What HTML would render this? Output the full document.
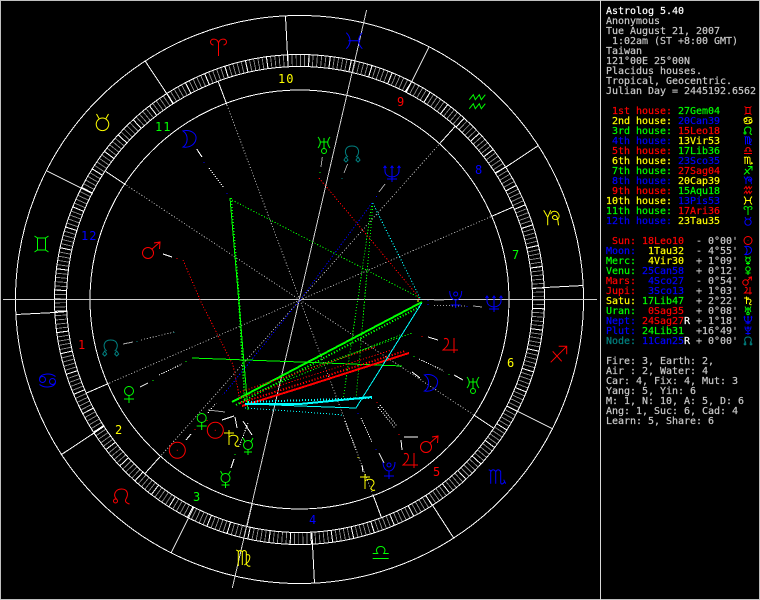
<!DOCTYPE html>
<html><head><meta charset="utf-8"><title>Astrolog 5.40</title>
<style>
html,body{margin:0;padding:0;background:#000;width:760px;height:600px;overflow:hidden}
svg{display:block;position:absolute;left:0;top:0}
text{font-family:"DejaVu Sans Mono","Liberation Mono",monospace;font-size:10px;letter-spacing:-.02px;white-space:pre;fill:#c8c8c8;stroke:#c8c8c8;stroke-width:.2px}
.w{fill:#fff;stroke:#fff}.r{fill:#ff0000;stroke:#ff0000}.y{fill:#ffff00;stroke:#ffff00}.g{fill:#00ff00;stroke:#00ff00}.b{fill:#0000ff;stroke:#0000ff}.t{fill:#008080;stroke:#008080}
text.n{font-size:12px;letter-spacing:1px;stroke-width:0}
</style></head><body>
<svg width="760" height="600" viewBox="0 0 760 600" xmlns="http://www.w3.org/2000/svg">
<defs>
<g id="ari" fill="none"><path d="M0 9V-4C-1-9-8-9-8-5C-8-3-6-2-5-2M0-4C1-9 8-9 8-5C8-3 6-2 5-2"/></g>
<g id="tau" fill="none"><circle cx="0" cy="3.300" r="6.300"/><path d="M-6-7L-3.500-2.500M6-7L3.500-2.500"/></g>
<g id="gem" fill="none"><path d="M-7-8L-4-6H4L7-8M-7 8L-4 6H4L7 8M-4-6V6M4-6V6"/></g>
<g id="can" fill="none"><circle cx="-5" cy="-1" r="3"/><circle cx="5" cy="1" r="3"/><path d="M-8-2C-7-7 3-8 8-4M8 2C7 7-3 8-8 4"/></g>
<g id="leo" fill="none"><circle cx="-6" cy="5" r="2"/><path d="M-5 3C-9-1-6-7 0-7C6-7 7-2 5 2C3 5 4 7 8 8"/></g>
<g id="vir" fill="none"><path d="M-7-8L-5-7V8M-5-6C-4-8-2-8-1-6V7M-1-6C0-8 2-8 3-6V5C3 7 5 9 7 8M3-3C8-5 8 3 1 7"/></g>
<g id="lib" fill="none"><path d="M-8 6H8M-8 1H-3C-6-3-3-6 0-6C3-6 6-3 3 1H8"/></g>
<g id="sco" fill="none"><path d="M-8-7L-6-6V7M-6-5C-4-8-2-7-1-5V7M-1-5C1-8 3-7 4-5V5C4 8 6 8 8 5L7 3M8 5L9 7"/></g>
<g id="sag" fill="none"><path d="M-8 8L8-8M0-8H8V0M-6-3L3 7"/></g>
<g id="cap" fill="none"><path d="M-8-8L-4-1V7M-4-1L-1-8M-1-4C0-8 5-8 7-4C9 0 4 3 1 0C0-2 3-4 5-2C7 2 6 5 7 7"/></g>
<g id="aqu" fill="none"><path d="M-8-3L-4-8L-2-3L2-8L4-3L8-8M-8 6L-4 1L-2 6L2 1L4 6L8 1"/></g>
<g id="pis" fill="none"><path d="M-8-8C-3-3-3 3-8 8M8-8C3-3 3 3 8 8M-6 0H6"/></g>
<g id="sun" fill="none"><circle r="8"/><path d="M0-.5V.5"/></g>
<g id="moo" fill="none"><path d="M-6-8C2-10 8-5 7 0C6 6 0 9-6 8C-1 5 0-4-6-8Z"/></g>
<g id="mer" fill="none"><circle cx="0" cy="-1" r="4.500"/><path d="M-5-8L-3-4.500M5-8L3-4.500M0 3.500V9M-4 6H4"/></g>
<g id="ven" fill="none"><circle cx="0" cy="-3" r="4.500"/><path d="M0 1.500V9M-5 5H5"/></g>
<g id="mar" fill="none"><circle cx="-5" cy="4" r="5.500"/><path d="M-1.500 0.500L7-7M1-6L7-7L6.500 0"/></g>
<g id="jup" fill="none"><path d="M-6-6C-2-8-1-4-2-1C-3 2-6 4-7 5H8M4-7V8"/></g>
<g id="sat" fill="none"><path d="M-3-8V7M-8-5H2M-3-1C0-4 6-3 6 1C6 3 3 5 3 6C3 8 5 9 7 8"/></g>
<g id="ura" fill="none"><circle cx="0" cy="6" r="2.500"/><path d="M-6-8C-3-4-3-1-6 3M6-8C3-4 3-1 6 3M-4-3H4M0-7V3.500"/></g>
<g id="nep" fill="none"><path d="M-7-8V-3C-7 1-3 3 0 3C3 3 7 1 7-3V-8M0-8V8M-5 5H5M-8.500-6L-7-8L-5.500-6M-1.500-6L0-8L1.500-6M5.500-6L7-8L8.500-6"/></g>
<g id="plu" fill="none"><circle cx="0" cy="-5" r="2"/><path d="M-6-8C-6-2-3 1 0 1C3 1 6-2 6-8M0 1V9M-5 6H5"/></g>
<g id="nod" fill="none"><path d="M-4 4C-8 1-8-7 0-7C8-7 8 1 4 4M-6 4L-4 7L-6 9L-8 7ZM6 4L8 7L6 9L4 7Z"/></g>
</defs>

<rect x="0.500" y="0.500" width="759" height="599" fill="#000" stroke="#c0c0c0"/>
<path d="M600.500 0V600" stroke="#d8d8d8" stroke-width="1" shape-rendering="crispEdges"/>

<g shape-rendering="crispEdges" fill="none">
<!-- degree band -->
<circle cx="299.500" cy="299.500" r="239" stroke="#8c8c8c" stroke-width="11" stroke-dasharray=".9 3.271" transform="rotate(.07 299.500 299.500)"/>
<circle cx="299.500" cy="299.500" r="239" stroke="#fff" stroke-width="11" stroke-dasharray="1 19.857" transform="rotate(2.07 299.500 299.500)"/>
<g stroke="#fff">
<circle cx="299.500" cy="299.500" r="284"/>
<circle cx="299.500" cy="299.500" r="245"/>
<circle cx="299.500" cy="299.500" r="233"/>
<circle cx="299.500" cy="299.500" r="209.500"/>
<!-- sign boundaries -->
<path d="M55 312.500L16 314.500M94 433L61.500 454.500M188.500 518L171 553M312.500 545L314.500 583.500M433 506L454 538.500M518 411.500L553 429M545 287.500L583.500 285.500M506 167L538.500 145.500M411.500 82L429 47M287.500 55L285.500 16.500M167 94L145.500 61.500M82 188.500L47 171"/>
<!-- band-crossing sign marks -->
<path d="M67 311.500L55 312.500M104 426.500L94 433M194 507L188.500 518M312 533L312.500 545M426 496L433 506M507 406L518 411.500M533 288.500L545 287.500M495 173L506 167M405 92L411.500 82M288 67L287.500 55M173 104L167 94M93 194L82 188.500"/>
<!-- house cusps -->
<path d="M108.500 383.500L86.500 393M160.700 456L144.800 473.700M252.300 503.500L246.800 526.800M373.300 495.700L381.700 518.200M474.300 415.300L494.300 428.600M491.500 216.400L513.500 206.800M439.300 144.100L455.200 126.300M226.700 104.300L218.300 81.800M125.700 184.700L105.700 171.400"/>
</g>
<!-- axes -->
<path d="M3 299.500H597M366.600 10L232.300 588" stroke="#d0d0d0"/>
<!-- house dotted -->
<g stroke="#a0a0a0" stroke-dasharray="1.200 1.800">
<path d="M300 300L108.500 383.500M300 300L160.700 456M300 300L373.300 495.700M300 300L474.300 415.300M300 300L491.500 216.400M300 300L439.300 144.100M300 300L226.700 104.300M300 300L125.700 184.700"/>
</g>

<!-- aspect lines -->
<g stroke="#00ff00" stroke-dasharray="1.200 1.800">
<path d="M232 200L420 298M372 203L343 400M373 203L356 400"/>
<path d="M231 198L239 300L245 400" stroke-width="2"/>
<path d="M232 402L400 335"/>
<path d="M236 405L421 306" stroke-width="2"/>
<path d="M240 392L412 333"/>
</g>
<g stroke="#00ff00">
<path d="M230 198L238.700 300L248 410"/>
<path d="M192 358L300 362L402 366"/>
<path d="M232 402L422 302" stroke-width="2"/>
</g>
<g stroke="#ff0000" stroke-dasharray="1.200 1.800">
<path d="M319 178L417 295L420 300M183 260L201 302L233 365L240 400"/>
<path d="M240 392L375 347M240 398L395 349"/>
<path d="M240 403L405 351" stroke-width="2"/>
</g>
<path d="M242 406L300 388L409 353" stroke="#ff0000" stroke-width="2"/>
<g stroke="#00ffff">
<path d="M421.700 303L356 408L300 406L250 404"/>
<path d="M372 397L300 404L245 404" stroke-width="2"/>
</g>
<g stroke="#00ffff" stroke-dasharray="1.200 1.800">
<path d="M372.700 203L421 300M245 408L300 411.700L343 415"/>
<path d="M248 402L372 398" stroke-width="2"/>
</g>
<path d="M372 203L300 300L223 395" stroke="#0000ff" stroke-dasharray="1.200 1.800"/>

<!-- planet leader lines -->
<g stroke="#fff">
<path d="M163 254L172 257M196.700 149L202 157M140 387L148 383M186 440L191 434M222 420L234 416M235 417L237 428M243 421L252 435M234 459L231 468M428 337L438 340M454 375L463 380M412 372L420 378M404 437L418 437M401 440L402 450M379 453L384 463M362 465L363 472"/>
</g>
<g stroke="#fff" stroke-dasharray="1.200 1.300">
<path d="M209 168L224 188M159 375L182 364M208 413L216 403M248 423L239 447M419 359L444 371M378 407L395 428M380 405L397 426M361 418L372 442M345 421L356 450"/>
</g>
<g stroke="#a0a0a0">
<path d="M322.300 157L321 167M347.600 164L344 173M385 184L379 192M123 344L133 342M208 410L225 412M434 300L444 300M473 306L482 307"/>
</g>
<path d="M434 305.500L465 306M141 340L174 332" stroke="#a0a0a0" stroke-dasharray="1.200 1.800"/>
<!-- coloured dots -->
<g stroke-width="1.200">
<path d="M204 162v1M227 193v1M376.500 196v1M428 300v1M428 304v1M467 306v1" stroke="#0000ff"/>
<path d="M177 258v1M195 429v1M207 420v1M422 336v1M399 434v1M377 402v1" stroke="#ff0000"/>
<path d="M320 172v1M153 380v1M186 361v1M235 454v1M449 374v1M414 356v1" stroke="#00ff00"/>
<path d="M342 178v1M137 341v1M174 332v1" stroke="#008080"/>
<path d="M376 449v1M358 413v1" stroke="#0000ff"/>
<path d="M358 457v1M418 300v2" stroke="#ffff00"/>
</g>
</g>

<!-- sign glyphs on wheel -->
<g stroke-width="1" stroke-linejoin="miter">
<use href="#ari" x="218.500" y="47" stroke="#ff0000"/>
<use href="#tau" x="102.500" y="121" stroke="#ffff00"/>
<use href="#gem" x="41.500" y="244" stroke="#00ff00"/>
<use href="#can" x="47.500" y="380.500" stroke="#0000ff"/>
<use href="#leo" x="121.500" y="496" stroke="#ff0000"/>
<use href="#vir" x="243.300" y="558" stroke="#ffff00"/>
<use href="#lib" x="380.700" y="552.500" stroke="#00ff00"/>
<use href="#sco" x="496.700" y="476.700" stroke="#0000ff"/>
<use href="#sag" x="558.700" y="354.300" stroke="#ff0000"/>
<use href="#cap" x="551.700" y="218.300" stroke="#ffff00"/>
<use href="#aqu" x="477.300" y="102.700" stroke="#00ff00"/>
<use href="#pis" x="354.300" y="40.700" stroke="#0000ff"/>
<!-- planets on wheel -->
<use href="#moo" x="189" y="139" stroke="#0000ff"/>
<use href="#mar" x="153" y="249" stroke="#ff0000"/>
<use href="#ura" x="324" y="145" stroke="#00ff00"/>
<use href="#nod" x="352" y="153" stroke="#008080"/>
<use href="#nep" x="392" y="174" stroke="#0000ff"/>
<use href="#nod" x="110.700" y="347" stroke="#008080"/>
<use href="#ven" x="129" y="394" stroke="#00ff00"/>
<use href="#ven" x="201.700" y="421" stroke="#00ff00"/>
<use href="#sun" x="215.300" y="430.300" stroke="#ff0000"/>
<use href="#sun" x="177.300" y="450.300" stroke="#ff0000"/>
<use href="#sat" x="232" y="438" stroke="#ffff00"/>
<use href="#mer" x="248" y="446" stroke="#00ff00"/>
<use href="#mer" x="225.500" y="479" stroke="#00ff00"/>
<use href="#plu" x="455.700" y="299" stroke="#0000ff"/>
<use href="#nep" x="494" y="304" stroke="#0000ff"/>
<use href="#jup" x="450" y="345" stroke="#ff0000"/>
<use href="#ura" x="473" y="385" stroke="#00ff00"/>
<use href="#moo" x="430.500" y="383" stroke="#0000ff"/>
<use href="#mar" x="431" y="443" stroke="#ff0000"/>
<use href="#jup" x="410" y="460" stroke="#ff0000"/>
<use href="#plu" x="389" y="470" stroke="#0000ff"/>
<use href="#sat" x="368" y="482" stroke="#ffff00"/>
</g>

<!-- house numbers -->
<text x="78" y="349" class="n r">1</text>
<text x="115" y="434" class="n y">2</text>
<text x="193" y="501" class="n g">3</text>
<text x="309" y="524" class="n b">4</text>
<text x="433" y="476" class="n r">5</text>
<text x="507" y="367" class="n y">6</text>
<text x="512" y="259" class="n g">7</text>
<text x="475" y="174" class="n b">8</text>
<text x="397" y="106" class="n r">9</text>
<text x="278" y="83" class="n y">10</text>
<text x="155" y="131" class="n g">11</text>
<text x="81" y="240" class="n b">12</text>

<!-- side panel -->
<text x="606" y="14" class="w">Astrolog 5.40</text>
<text x="606" y="24">Anonymous</text>
<text x="606" y="34">Tue August 21, 2007</text>
<text x="606" y="44"> 1:02am (ST +8:00 GMT)</text>
<text x="606" y="54">Taiwan</text>
<text x="606" y="64">121°00E 25°00N</text>
<text x="606" y="74">Placidus houses.</text>
<text x="606" y="84">Tropical, Geocentric.</text>
<text x="606" y="94">Julian Day = 2445192.6562</text>

<text x="612" y="114" class="r">1st house:</text><text x="678" y="114" class="g">27Gem04</text>
<text x="612" y="124" class="y">2nd house:</text><text x="678" y="124" class="b">20Can39</text>
<text x="612" y="134" class="g">3rd house:</text><text x="678" y="134" class="r">15Leo18</text>
<text x="612" y="144" class="b">4th house:</text><text x="678" y="144" class="y">13Vir53</text>
<text x="612" y="154" class="r">5th house:</text><text x="678" y="154" class="g">17Lib36</text>
<text x="612" y="164" class="y">6th house:</text><text x="678" y="164" class="b">23Sco35</text>
<text x="612" y="174" class="g">7th house:</text><text x="678" y="174" class="r">27Sag04</text>
<text x="612" y="184" class="b">8th house:</text><text x="678" y="184" class="y">20Cap39</text>
<text x="612" y="194" class="r">9th house:</text><text x="678" y="194" class="g">15Aqu18</text>
<text x="606" y="204" class="y">10th house:</text><text x="678" y="204" class="b">13Pis53</text>
<text x="606" y="214" class="g">11th house:</text><text x="678" y="214" class="r">17Ari36</text>
<text x="606" y="224" class="b">12th house:</text><text x="678" y="224" class="y">23Tau35</text>

<text x="612" y="244" class="r">Sun:</text><text x="642" y="244" class="r">18Leo10</text><text x="696" y="244">- 0°00'</text>
<text x="606" y="254" class="b">Moon:</text><text x="648" y="254" class="y">1Tau32</text><text x="696" y="254">- 4°55'</text>
<text x="606" y="264" class="g">Merc:</text><text x="648" y="264" class="y">4Vir30</text><text x="696" y="264">+ 1°09'</text>
<text x="606" y="274" class="g">Venu:</text><text x="642" y="274" class="b">25Can58</text><text x="696" y="274">+ 0°12'</text>
<text x="606" y="284" class="r">Mars:</text><text x="648" y="284" class="b">4Sco27</text><text x="696" y="284">- 0°54'</text>
<text x="606" y="294" class="r">Jupi:</text><text x="648" y="294" class="b">3Sco13</text><text x="696" y="294">+ 1°03'</text>
<text x="606" y="304" class="y">Satu:</text><text x="642" y="304" class="g">17Lib47</text><text x="696" y="304">+ 2°22'</text>
<text x="606" y="314" class="g">Uran:</text><text x="648" y="314" class="r">0Sag35</text><text x="696" y="314">+ 0°08'</text>
<text x="606" y="324" class="b">Nept:</text><text x="642" y="324" class="r">24Sag27</text><text x="684" y="324" class="w">R</text><text x="696" y="324">+ 1°18'</text>
<text x="606" y="334" class="b">Plut:</text><text x="642" y="334" class="g">24Lib31</text><text x="696" y="334">+16°49'</text>
<text x="606" y="344" class="t">Node:</text><text x="642" y="344" class="b">11Can25</text><text x="684" y="344" class="w">R</text><text x="696" y="344">+ 0°00'</text>

<text x="606" y="364">Fire: 3, Earth: 2,</text>
<text x="606" y="374">Air : 2, Water: 4</text>
<text x="606" y="384">Car: 4, Fix: 4, Mut: 3</text>
<text x="606" y="394">Yang: 5, Yin: 6</text>
<text x="606" y="404">M: 1, N: 10, A: 5, D: 6</text>
<text x="606" y="414">Ang: 1, Suc: 6, Cad: 4</text>
<text x="606" y="424">Learn: 5, Share: 6</text>

<!-- panel glyphs -->
<g stroke-width="2">
<use href="#gem" transform="translate(748 110.500) scale(.5)" stroke="#ff0000"/>
<use href="#can" transform="translate(748 120.500) scale(.5)" stroke="#ffff00"/>
<use href="#leo" transform="translate(748 130.500) scale(.5)" stroke="#00ff00"/>
<use href="#vir" transform="translate(748 140.500) scale(.5)" stroke="#0000ff"/>
<use href="#lib" transform="translate(748 150.500) scale(.5)" stroke="#ff0000"/>
<use href="#sco" transform="translate(748 160.500) scale(.5)" stroke="#ffff00"/>
<use href="#sag" transform="translate(748 170.500) scale(.5)" stroke="#00ff00"/>
<use href="#cap" transform="translate(748 180.500) scale(.5)" stroke="#0000ff"/>
<use href="#aqu" transform="translate(748 190.500) scale(.5)" stroke="#ff0000"/>
<use href="#pis" transform="translate(748 200.500) scale(.5)" stroke="#ffff00"/>
<use href="#ari" transform="translate(748 210.500) scale(.5)" stroke="#00ff00"/>
<use href="#tau" transform="translate(748 220.500) scale(.5)" stroke="#0000ff"/>
<use href="#sun" transform="translate(748 240.500) scale(.5)" stroke="#ff0000"/>
<use href="#moo" transform="translate(748 250.500) scale(.5)" stroke="#0000ff"/>
<use href="#mer" transform="translate(748 260.500) scale(.5)" stroke="#00ff00"/>
<use href="#ven" transform="translate(748 270.500) scale(.5)" stroke="#00ff00"/>
<use href="#mar" transform="translate(748 280.500) scale(.5)" stroke="#ff0000"/>
<use href="#jup" transform="translate(748 290.500) scale(.5)" stroke="#ff0000"/>
<use href="#sat" transform="translate(748 300.500) scale(.5)" stroke="#ffff00"/>
<use href="#ura" transform="translate(748 310.500) scale(.5)" stroke="#00ff00"/>
<use href="#nep" transform="translate(748 320.500) scale(.5)" stroke="#0000ff"/>
<use href="#plu" transform="translate(748 330.500) scale(.5)" stroke="#0000ff"/>
<use href="#nod" transform="translate(748 340.500) scale(.5)" stroke="#008080"/>
</g>
</svg>
</body></html>
